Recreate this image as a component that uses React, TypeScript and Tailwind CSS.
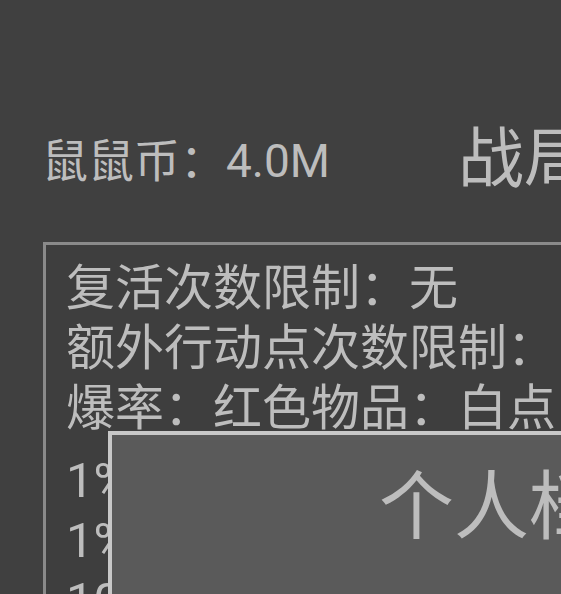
const font = "font-[Roboto,'Noto_Sans_CJK_SC',sans-serif]";

const rules = ["复活次数限制：无", "额外行动点次数限制：", "爆率：红色物品：白点"];

const drops = ["1%，金色物品：", "1%，紫色物品：", "10%，蓝色物品："];

function ProfileDialog() {
  return (
    <div className="absolute left-[108px] top-[431px] h-[420px] w-[842px] border-4 border-[#c8c8c8] bg-[#5a5a5a]">
      <h2 className="pt-[28px] text-center text-[75px] leading-[88px] font-normal whitespace-nowrap">
        个人档案
      </h2>
      <div className="mt-[38px] pl-[78px] text-[48px] leading-[60px] whitespace-nowrap">
        昵称：鼠鼠
      </div>
    </div>
  );
}

export default function App() {
  return (
    <div
      className={`relative h-[594px] w-[561px] overflow-hidden bg-[#404040] text-[#bdbdbd] ${font}`}
    >
      <div className="flex items-center whitespace-nowrap pl-[42px] pt-[126px]">
        <span className="w-[416px] shrink-0 text-[46px] leading-[60px]">鼠鼠币：4.0M</span>
        <span className="-mt-[2px] text-[66px] leading-[72px]">战局信息</span>
      </div>

      <div className="ml-[43px] mt-[46px] w-[700px] border-[3px] border-[#8a8a8a] bg-[#3e3e3e] pl-[20px] pt-[14px]">
        {rules.map((line) => (
          <div key={line} className="text-[49px] leading-[60px] whitespace-nowrap">
            {line}
          </div>
        ))}
        <div className="mt-[12px]">
          {drops.map((line) => (
            <div key={line} className="text-[49px] leading-[60px] whitespace-nowrap">
              {line}
            </div>
          ))}
        </div>
      </div>

      <ProfileDialog />
    </div>
  );
}
